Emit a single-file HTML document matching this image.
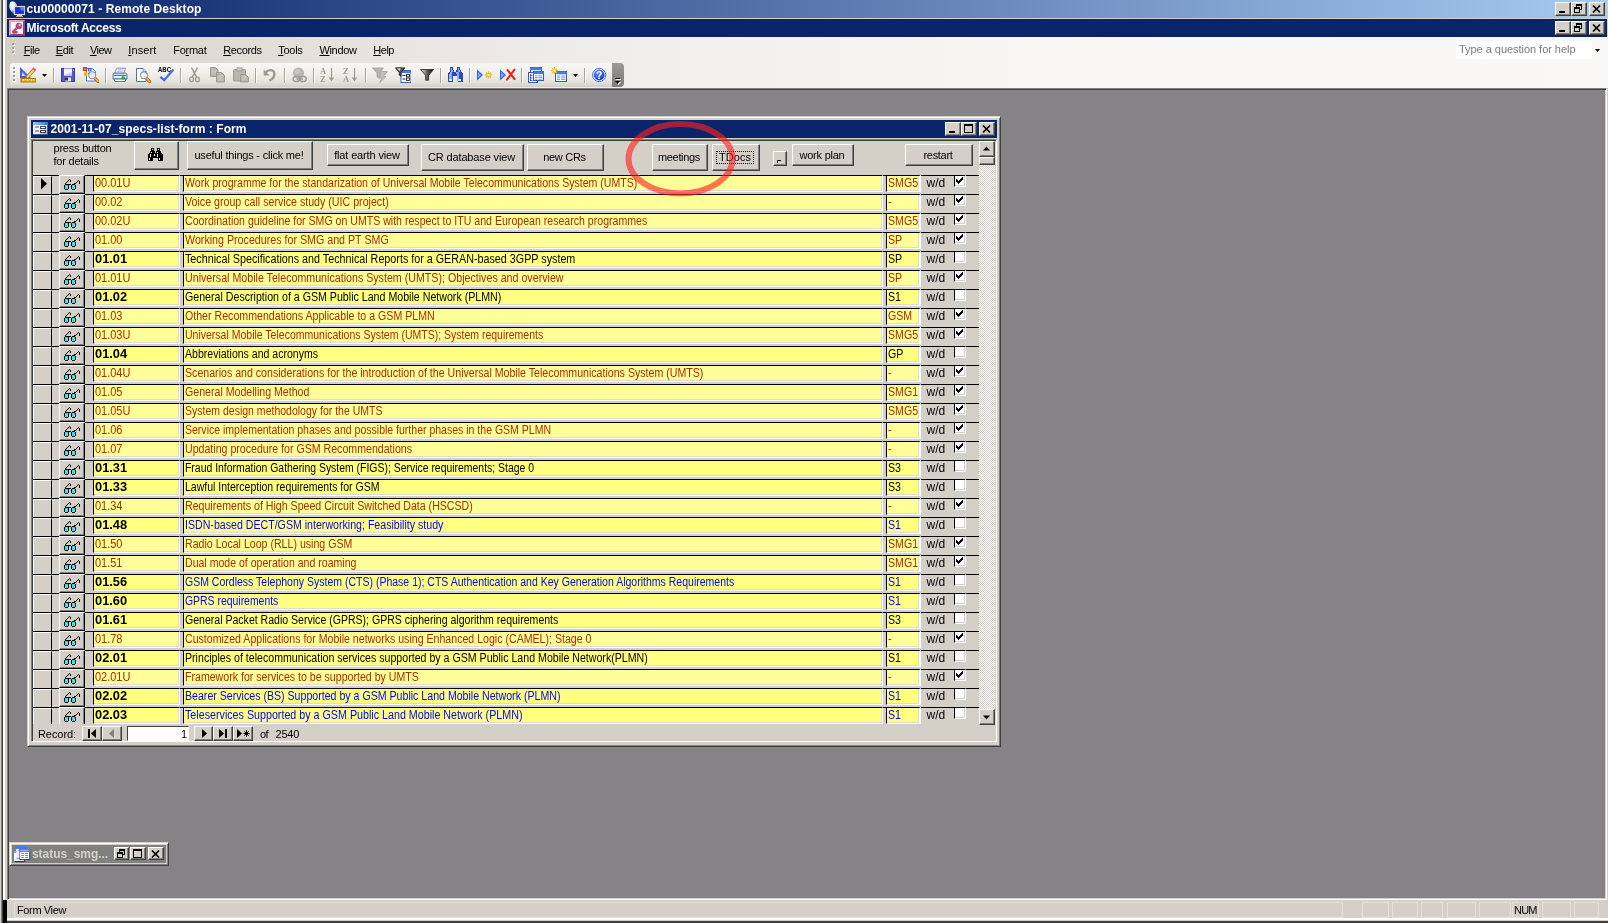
<!DOCTYPE html>
<html lang="en"><head><meta charset="utf-8"><title>Microsoft Access - Remote Desktop</title>
<style>
*{box-sizing:border-box;margin:0;padding:0}
html,body{width:1608px;height:923px;overflow:hidden;background:#d4d0c8}
body{position:relative;font-family:"Liberation Sans",sans-serif;font-size:11px;color:#000;line-height:1}
.a{position:absolute}
.t{position:absolute;white-space:nowrap;line-height:13px;height:13px}
.tb{font-weight:bold;color:#fff}
/* classic raised button */
.btn{position:absolute;background:#d4d0c8;border:1px solid;border-color:#fff #404040 #404040 #fff;box-shadow:inset -1px -1px 0 #808080,inset 1px 1px 0 #d4d0c8}
.cap{position:absolute;background:#d4d0c8;border:1px solid;border-color:#fff #404040 #404040 #fff;box-shadow:inset -1px -1px 0 #808080}
.cb{position:absolute;text-align:center;white-space:nowrap}
/* rows */
.row{position:absolute;left:0;width:946px;height:19px;background:#d4d0c8}
.ln{position:absolute;left:0;top:0;width:946px;height:1px;background:#000}
.rs{position:absolute;left:0;top:1px;width:19px;height:18px;border-left:1px solid #fff;border-top:1px solid #fff;border-right:1px solid #000}
.gb{position:absolute;left:26px;top:0;width:26px;height:19px;background:#d4d0c8;border:1px solid;border-color:#fff #000 #000 #fff;box-shadow:inset -1px -1px 0 #808080}
.tx{position:absolute;top:0;height:17px;border-top:1px solid #000;border-left:1px solid #000;border-bottom:1px solid #fff;border-right:1px solid #fff;box-shadow:inset -1px -1px 0 #dedbd2;overflow:hidden;white-space:nowrap}
.tx span{position:absolute;left:1px;top:0px;line-height:14px;font-size:12px;transform-origin:0 0;transform:scaleX(.883);white-space:nowrap}
.yr{background:#ffff99}.yk{background:#ffff80}
.cr{color:#a62f00}.ck{color:#000}.cbl{color:#0000ff}
.tx span.bold{font-weight:bold;transform:scaleX(1.07)}
.tx span.num{transform:scaleX(.915)}
.wd{position:absolute;left:893.5px;top:1px;line-height:14px;font-size:12px;white-space:nowrap}
.chk{position:absolute;left:921px;top:0;width:12px;height:12px;background:#fff;border-left:1px solid #000;border-top:1px solid #000;border-right:1px solid #fff;border-bottom:1px solid #fff;box-shadow:inset -1px -1px 0 #d4d0c8}
.chk svg{position:absolute;left:1px;top:1px}
.sep{position:absolute;top:68px;width:1px;height:15px;background:#a6a398;box-shadow:1px 0 0 #fff}
.ic{position:absolute;top:67px;width:16px;height:16px}
.sp{position:absolute;top:902px;height:16px;border:1px solid #e6e1dc}
</style></head>
<body><div id="root" style="position:absolute;left:0;top:0;width:1608px;height:923px;will-change:transform">
<div class="a" style="left:0;top:0;width:1px;height:923px;background:#d4d0c8"></div>
<div class="a" style="left:1px;top:0;width:1px;height:923px;background:#808080"></div>
<div class="a" style="left:2px;top:0;width:1px;height:923px;background:#404040"></div>
<div class="a" style="left:3px;top:0;width:2px;height:923px;background:#fff"></div>
<div class="a" style="left:5px;top:0;width:2px;height:923px;background:#d4d0c8"></div>
<div class="a" style="left:7px;top:0;width:1600px;height:18px;background:linear-gradient(90deg,#0a246a 0%,#a6caf0 100%)"></div>
<div class="a" style="left:7px;top:18px;width:1600px;height:1px;background:#d4d0c8"></div>
<div class="a" style="left:7px;top:19px;width:1600px;height:18px;background:#0a246a"></div>
<div class="t tb" style="left:26.5px;top:2.5px;font-size:12px;letter-spacing:0.084px;">cu00000071 - Remote Desktop</div>
<div class="t tb" style="left:26.5px;top:21.5px;font-size:12px;letter-spacing:-0.245px;">Microsoft Access</div>
<div class="cap" style="left:1555px;top:2px;width:16px;height:14px"><svg class="a" style="left:0;top:0" width="14" height="12"><rect x="3" y="8" width="6" height="2" fill="#000"/></svg></div>
<div class="cap" style="left:1571px;top:2px;width:16px;height:14px"><svg class="a" style="left:0;top:0" width="14" height="12"><rect x="4.5" y="1.5" width="5" height="5" fill="none" stroke="#000"/><rect x="4" y="1" width="6" height="2" fill="#000"/><rect x="2.5" y="4.5" width="5" height="5" fill="#d4d0c8" stroke="#000"/><rect x="2" y="4" width="6" height="2" fill="#000"/></svg></div>
<div class="cap" style="left:1589px;top:2px;width:16px;height:14px"><svg class="a" style="left:0;top:0" width="14" height="12"><path d="M3 2.5L10 9.5M10 2.5L3 9.5" stroke="#000" stroke-width="1.7" fill="none"/></svg></div>
<div class="cap" style="left:1555px;top:21px;width:16px;height:14px"><svg class="a" style="left:0;top:0" width="14" height="12"><rect x="3" y="8" width="6" height="2" fill="#000"/></svg></div>
<div class="cap" style="left:1571px;top:21px;width:16px;height:14px"><svg class="a" style="left:0;top:0" width="14" height="12"><rect x="4.5" y="1.5" width="5" height="5" fill="none" stroke="#000"/><rect x="4" y="1" width="6" height="2" fill="#000"/><rect x="2.5" y="4.5" width="5" height="5" fill="#d4d0c8" stroke="#000"/><rect x="2" y="4" width="6" height="2" fill="#000"/></svg></div>
<div class="cap" style="left:1589px;top:21px;width:16px;height:14px"><svg class="a" style="left:0;top:0" width="14" height="12"><path d="M3 2.5L10 9.5M10 2.5L3 9.5" stroke="#000" stroke-width="1.7" fill="none"/></svg></div>
<div class="a" style="left:7px;top:37px;width:1601px;height:51px;background:linear-gradient(90deg,#d4d0c8 0%,#dcd8d1 10%,#e9e6e1 25%,#f1efeb 40%,#f6f5f2 60%,#f9f8f7 100%)"></div>
<svg class="a" style="left:12px;top:42px" width="5" height="14"><rect x="1" y="2" width="2" height="2" fill="#fff"/><rect x="0" y="1" width="2" height="2" fill="#a09c94"/><rect x="1" y="6" width="2" height="2" fill="#fff"/><rect x="0" y="5" width="2" height="2" fill="#a09c94"/><rect x="1" y="10" width="2" height="2" fill="#fff"/><rect x="0" y="9" width="2" height="2" fill="#a09c94"/></svg>
<div class="t" style="left:23.75px;top:44px;letter-spacing:-0.493px"><u>F</u>ile</div>
<div class="t" style="left:55.75px;top:44px;letter-spacing:-0.364px"><u>E</u>dit</div>
<div class="t" style="left:90px;top:44px;letter-spacing:-0.536px"><u>V</u>iew</div>
<div class="t" style="left:128.25px;top:44px;letter-spacing:0.124px"><u>I</u>nsert</div>
<div class="t" style="left:173.25px;top:44px;letter-spacing:-0.264px">Fo<u>r</u>mat</div>
<div class="t" style="left:223.25px;top:44px;letter-spacing:-0.387px"><u>R</u>ecords</div>
<div class="t" style="left:278.25px;top:44px;letter-spacing:-0.286px"><u>T</u>ools</div>
<div class="t" style="left:319.5px;top:44px;letter-spacing:-0.354px"><u>W</u>indow</div>
<div class="t" style="left:373.25px;top:44px;letter-spacing:-0.468px"><u>H</u>elp</div>
<div class="a" style="left:1456px;top:41px;width:136px;height:18px;background:#fff"></div>
<div class="t " style="left:1459px;top:43px;letter-spacing:-0.038px;color:#7a7a7a;">Type a question for help</div>
<svg class="a" style="left:1594px;top:48px" width="8" height="5"><path d="M1 1h5l-2.5 3z" fill="#000"/></svg>
<div class="a" style="left:10px;top:63px;width:602px;height:24px;border-radius:3px 0 0 3px;background:linear-gradient(180deg,#f8f7f5 0%,#f1f0ec 40%,#e4e2dc 80%,#d2cfc7 100%)"></div>
<div class="a" style="left:612px;top:63px;width:12px;height:24px;border-radius:0 4px 4px 0;background:linear-gradient(180deg,#9c9b98 0%,#8a8988 50%,#7f7e7e 100%)"></div>
<svg class="a" style="left:614px;top:77px" width="9" height="9"><rect x="2" y="2" width="5" height="1" fill="#fff"/><path d="M2 5h5l-2.5 3z" fill="#fff"/><rect x="1" y="1" width="5" height="1" fill="#000"/><path d="M1 4h5l-2.5 3z" fill="#000"/></svg>
<svg class="a" style="left:13px;top:66px" width="5" height="18"><rect x="1" y="2" width="2" height="2" fill="#fff"/><rect x="0" y="1" width="2" height="2" fill="#a09c94"/><rect x="1" y="6" width="2" height="2" fill="#fff"/><rect x="0" y="5" width="2" height="2" fill="#a09c94"/><rect x="1" y="10" width="2" height="2" fill="#fff"/><rect x="0" y="9" width="2" height="2" fill="#a09c94"/><rect x="1" y="14" width="2" height="2" fill="#fff"/><rect x="0" y="13" width="2" height="2" fill="#a09c94"/></svg>
<div class="sep" style="left:53px"></div>
<div class="sep" style="left:105px"></div>
<div class="sep" style="left:180px"></div>
<div class="sep" style="left:255px"></div>
<div class="sep" style="left:284px"></div>
<div class="sep" style="left:313px"></div>
<div class="sep" style="left:365px"></div>
<div class="sep" style="left:440px"></div>
<div class="sep" style="left:469px"></div>
<div class="sep" style="left:521px"></div>
<div class="sep" style="left:584px"></div>
<svg class="a" style="left:20px;top:67px" width="16" height="16" viewBox="0 0 16 16"><path d="M0 0V11H11Z" fill="#3f63e0"/><path d="M2 5V9H6Z" fill="#b9c9f6"/><rect x="2" y="7" width="1.5" height="1.5" fill="#fff"/><path d="M7 10.5L14.2 2.4" stroke="#a07818" stroke-width="3.6"/><path d="M7 10.5L14.2 2.4" stroke="#f2d468" stroke-width="2.2"/><path d="M13.4 3.3L15 1.5" stroke="#d86a60" stroke-width="3.4"/><path d="M6.2 11.6L8.4 10.9L7.0 9.4Z" fill="#fff" stroke="#555" stroke-width=".4"/><rect x="1" y="11.5" width="15" height="3.5" fill="#e8b428" stroke="#a87808" stroke-width="1"/><path d="M3.5 12v1.5M5.5 12v1M7.5 12v1.5M9.5 12v1M11.5 12v1.5M13.5 12v1" stroke="#fff6c0" stroke-width="1"/></svg>
<svg class="a" style="left:42px;top:74px" width="5" height="3" viewBox="0 0 5 3"><path d="M0 0h5l-2.5 3z" fill="#000"/></svg>
<svg class="a" style="left:61px;top:67px" width="16" height="16" viewBox="0 0 16 16"><rect x="0.5" y="1.5" width="13" height="13" fill="#5656d0" stroke="#3a3aa8"/><rect x="3" y="1.5" width="8" height="7" fill="#f4f4fc"/><path d="M3 8.5h8V5z" fill="#c8c8e8"/><rect x="4" y="10.5" width="6" height="4" fill="#e8e8f4"/><rect x="4" y="10.5" width="3" height="3" fill="#303048"/><rect x="12" y="2.5" width="1" height="1.5" fill="#c8c8f0"/></svg>
<svg class="a" style="left:83px;top:67px" width="16" height="16" viewBox="0 0 16 16"><path d="M3.5 1.5h6l3 3v9.5h-9z" fill="#fff" stroke="#4c72a8"/><rect x="0" y="0" width="4" height="4" fill="#e02020"/><rect x="1.3" y="1.3" width="1.6" height="1.6" fill="#f8d040"/><rect x="5" y="1" width="3.6" height="3.4" fill="#2868e0"/><rect x="6" y="2" width="1.4" height="1.4" fill="#b8e0ff"/><rect x="1" y="5.4" width="3.4" height="3.4" fill="#f0b010"/><rect x="5" y="5.6" width="2" height="2" fill="#30a030"/><path d="M11.6 10.8L15 14.4" stroke="#a86410" stroke-width="3.2" stroke-linecap="round"/><path d="M11.6 10.8L14.8 14.2" stroke="#f8b040" stroke-width="1.8" stroke-linecap="round"/><circle cx="9.2" cy="8.2" r="3.4" fill="#e8f0fc" stroke="#8c98a8" stroke-width="1.1"/></svg>
<svg class="a" style="left:112px;top:67px" width="16" height="16" viewBox="0 0 16 16"><path d="M4.6 1.2h8.8l-1.6 5H2.8z" fill="#fff" stroke="#6a88b8" stroke-width=".9"/><path d="M5.8 2.8h5.6M5.3 4.4h5.6" stroke="#9cb0d0" stroke-width=".9"/><path d="M1 8Q1 6.2 2.8 6.2h10.4Q15 6.2 15 8V12H1z" fill="#e6ebf4" stroke="#4a689c" stroke-width=".9"/><path d="M1.6 8.4h12.8" stroke="#5a7ab0" stroke-width="1.2"/><path d="M2 12h12l-.8 2.5H2.8z" fill="#fafbfd" stroke="#4a689c" stroke-width=".9"/><rect x="10" y="9.8" width="2.4" height="2.2" fill="#10d020" stroke="#088010" stroke-width=".5"/></svg>
<svg class="a" style="left:136px;top:67px" width="16" height="16" viewBox="0 0 16 16"><path d="M.5 1.5h6.5l3 3v10H.5z" fill="#fff" stroke="#4c72a8"/><path d="M7 1.5v3h3" fill="#dbe6f6" stroke="#4c72a8" stroke-width=".8"/><path d="M10.3 11L13.6 14.6" stroke="#a86410" stroke-width="3.2" stroke-linecap="round"/><path d="M10.3 11L13.4 14.4" stroke="#f8b040" stroke-width="1.8" stroke-linecap="round"/><circle cx="8" cy="8.3" r="3.4" fill="#eef3fc" stroke="#8c98a8" stroke-width="1.1"/></svg>
<svg class="a" style="left:158px;top:67px" width="18" height="16" viewBox="0 0 18 16"><text x="0" y="5.2" font-family="Liberation Sans, sans-serif" font-size="6.4" font-weight="bold" fill="#000" textLength="13" lengthAdjust="spacingAndGlyphs">ABC</text><path d="M2.4 9.8L6.2 13.2L15.4 2.6" stroke="#3f6fe0" stroke-width="2.3" fill="none"/></svg>
<svg class="a" style="left:189px;top:67px" width="11" height="16" viewBox="0 0 11 16"><path d="M2.5 0.5L7.6 10.2M8.5 0.5L3.4 10.2" stroke="#9d9a94" stroke-width="1.5" fill="none"/><ellipse cx="2.6" cy="12.4" rx="1.9" ry="2.2" fill="none" stroke="#9d9a94" stroke-width="1.3"/><ellipse cx="8.4" cy="12.4" rx="1.9" ry="2.2" fill="none" stroke="#9d9a94" stroke-width="1.3"/></svg>
<svg class="a" style="left:210px;top:67px" width="16" height="16" viewBox="0 0 16 16"><path d="M.5 .5h5l2.5 2.5v6.5H.5z" fill="#b9b6b0" stroke="#9d9a94"/><path d="M6.5 5.5h5l3 3v6.5H6.5z" fill="#b9b6b0" stroke="#9d9a94"/><path d="M2 4h4M2 6h4M8.5 9h4M8.5 11h4M8.5 13h4" stroke="#d8d6d0" stroke-width=".8"/></svg>
<svg class="a" style="left:233px;top:67px" width="16" height="16" viewBox="0 0 16 16"><rect x=".5" y="2.5" width="12" height="11.5" rx="1" fill="#b9b6b0" stroke="#9d9a94"/><rect x="4" y=".8" width="5" height="3.2" fill="#cfccc6" stroke="#9d9a94" stroke-width=".8"/><path d="M7.5 7.5h5l3 3v4.5h-8z" fill="#b9b6b0" stroke="#9d9a94"/><path d="M9 10h4M9 12h4" stroke="#d8d6d0" stroke-width=".8"/></svg>
<svg class="a" style="left:263px;top:67px" width="13" height="16" viewBox="0 0 13 16"><path d="M2.2 5.8C6 1.5 11.6 2.6 11.4 7.4C11.2 10.6 8.6 12.6 6.4 13.6" fill="none" stroke="#9d9a94" stroke-width="2.3"/><path d="M.6 2.4V8.4H6.6Z" fill="#9d9a94"/></svg>
<svg class="a" style="left:290.5px;top:67px" width="16" height="16" viewBox="0 0 16 16"><circle cx="7.5" cy="6" r="5.6" fill="#b9b6b0"/><circle cx="6" cy="4.4" r="2.6" fill="#c9c6c0"/><rect x="2.2" y="9.6" width="6.4" height="4.8" rx="2.4" fill="none" stroke="#9d9a94" stroke-width="1.5"/><rect x="8.8" y="9.6" width="6.4" height="4.8" rx="2.4" fill="none" stroke="#9d9a94" stroke-width="1.5"/><path d="M5.5 12h6.5" stroke="#9d9a94" stroke-width="1.5"/></svg>
<svg class="a" style="left:320px;top:67px" width="16" height="16" viewBox="0 0 16 16"><text x="0" y="7" font-family="Liberation Serif, serif" font-size="8.5" font-weight="bold" fill="#9d9a94">A</text><text x="0" y="15.4" font-family="Liberation Serif, serif" font-size="8.5" font-weight="bold" fill="#9d9a94">Z</text><path d="M11.5 1v12" stroke="#9d9a94" stroke-width="1.2"/><path d="M8.8 10.6h5.4l-2.7 4z" fill="#9d9a94"/></svg>
<svg class="a" style="left:343px;top:67px" width="16" height="16" viewBox="0 0 16 16"><text x="0" y="7" font-family="Liberation Serif, serif" font-size="8.5" font-weight="bold" fill="#9d9a94">Z</text><text x="0" y="15.4" font-family="Liberation Serif, serif" font-size="8.5" font-weight="bold" fill="#9d9a94">A</text><path d="M11.5 1v12" stroke="#9d9a94" stroke-width="1.2"/><path d="M8.8 10.6h5.4l-2.7 4z" fill="#9d9a94"/></svg>
<svg class="a" style="left:372px;top:67px" width="16" height="16" viewBox="0 0 16 16"><path d="M.5 1h11L7.4 6v5.4L5 9.6V6z" fill="#b9b6b0" stroke="#9d9a94" stroke-width=".7"/><path d="M9 4.6h6.5L11 9.6h3L7.8 15.6L9.8 10.8H7z" fill="#c4c1bb" stroke="#9d9a94" stroke-width=".7"/></svg>
<svg class="a" style="left:395px;top:67px" width="16" height="16" viewBox="0 0 16 16"><rect x="6" y="3.5" width="10" height="12" fill="#fff" stroke="#3a5cb8" stroke-width="1"/><rect x="6" y="3.5" width="10" height="2.6" fill="#4a7ae0"/><path d="M7.5 8.5h3M7.5 12h3" stroke="#222" stroke-width="1"/><rect x="11.5" y="7.4" width="3" height="2.4" fill="#fff" stroke="#222" stroke-width=".9"/><rect x="11.5" y="11" width="3" height="2.4" fill="#fff" stroke="#222" stroke-width=".9"/><path d="M.4 .8h9.4L6 5.4v4L4.2 8V5.4z" fill="#555" stroke="#111" stroke-width=".7"/><path d="M1.8 1.4h4L4.6 4z" fill="#ddd"/></svg>
<svg class="a" style="left:419.5px;top:68px" width="14" height="14" viewBox="0 0 14 14"><defs><linearGradient id="fg" x1="0" x2="1"><stop offset="0" stop-color="#f4f4f4"/><stop offset=".55" stop-color="#555"/><stop offset="1" stop-color="#111"/></linearGradient></defs><path d="M.5 1.5h13L8.6 7.4v4.8H5.6V7.4z" fill="url(#fg)" stroke="#222" stroke-width=".8"/></svg>
<svg class="a" style="left:447px;top:67px" width="16" height="16" viewBox="0 0 16 16"><path d="M3 0h3v3h1v2h2V3h1V0h3v3h1v2h1v1h1v9h-5V9H6v6H1V6h1V5h1z" fill="#2a48b8"/><path d="M4 1h1v2h1v2h-1v9H2V7h1V5h1z" fill="#8fa8f0"/><path d="M11 1h1v2h1v2h-1v9h-2V7h-1V5h2z" fill="#8fa8f0"/><rect x="2" y="12" width="3" height="2" fill="#dfe7fb"/><rect x="11" y="12" width="3" height="2" fill="#dfe7fb"/></svg>
<svg class="a" style="left:476.5px;top:67px" width="16" height="16" viewBox="0 0 16 16"><path d="M0 2.5v11l6-5.5z" fill="#2f66e4"/><path d="M1 5v6l3.2-3z" fill="#7fa6f4"/><path d="M11.5 4.5v7M8.0 8h7M9.0 5.5l5 5M14.0 5.5l-5 5" stroke="#f0b818" stroke-width="1.3"/><rect x="10.5" y="7" width="2" height="2" fill="#fffbd0"/></svg>
<svg class="a" style="left:500px;top:67px" width="16" height="16" viewBox="0 0 16 16"><path d="M0 2.5v11l6-5.5z" fill="#2f66e4"/><path d="M1 5v6l3.2-3z" fill="#7fa6f4"/><path d="M7.5 3L14.5 12M14.5 2.6L7 12.6" stroke="#e82818" stroke-width="2.1" stroke-linecap="round"/></svg>
<svg class="a" style="left:528px;top:67px" width="16" height="16" viewBox="0 0 16 16"><rect x="2.5" y=".5" width="11" height="9" fill="#dfe8fa" stroke="#3a5cb8"/><rect x="2.5" y=".5" width="11" height="2.6" fill="#4a7ae0"/><rect x=".5" y="5.5" width="9" height="10" fill="#f4f7fd" stroke="#3a5cb8"/><path d="M2.5 7v7M2.5 8.5h2M2.5 11h2M2.5 13.5h2" stroke="#3a5cb8" stroke-width=".9"/><rect x="5.5" y="4.5" width="10" height="9" fill="#fff" stroke="#3a5cb8"/><rect x="5.5" y="4.5" width="10" height="2.6" fill="#4a7ae0"/><path d="M7 8.8h2.6M10.4 8.8h4M7 10.5h2.6M10.4 10.5h4M7 12.2h2.6M10.4 12.2h4" stroke="#7a98dc" stroke-width="1"/></svg>
<svg class="a" style="left:550.5px;top:67px" width="16" height="16" viewBox="0 0 16 16"><rect x="4.5" y="4.5" width="11" height="10" fill="#fff" stroke="#3a5cb8"/><rect x="4.5" y="4.5" width="11" height="2.8" fill="#4a7ae0"/><path d="M6 9h3M10 9h4.4M6 10.8h3M10 10.8h4.4M6 12.6h3M10 12.6h4.4" stroke="#7a98dc" stroke-width="1"/><path d="M3.5 0.10000000000000009v7M0.0 3.6h7M1.0 1.1l5 5M6.0 1.1l-5 5" stroke="#f0b818" stroke-width="1.3"/><rect x="2.5" y="2.6" width="2" height="2" fill="#fffbd0"/></svg>
<svg class="a" style="left:573px;top:74px" width="5" height="3" viewBox="0 0 5 3"><path d="M0 0h5l-2.5 3z" fill="#000"/></svg>
<svg class="a" style="left:592px;top:67px" width="15" height="16" viewBox="0 0 15 16"><defs><radialGradient id="hg" cx=".35" cy=".3" r=".8"><stop offset="0" stop-color="#5a94ff"/><stop offset="1" stop-color="#1238c8"/></radialGradient></defs><circle cx="7.2" cy="8" r="6.6" fill="#fff" stroke="#2a58d8" stroke-width=".9"/><circle cx="7.2" cy="8" r="5.4" fill="url(#hg)"/><text x="7.2" y="11.8" text-anchor="middle" font-family="Liberation Sans, sans-serif" font-size="10.5" font-weight="bold" fill="#fff">?</text></svg>
<div class="a" style="left:7px;top:88px;width:1600px;height:812px;background:#858386;border:1px solid;border-color:#808080 #fff #fff #808080;box-shadow:inset 1px 1px 0 #404040,inset -1px -1px 0 #d4d0c8"></div>
<div class="a" style="left:7px;top:900px;width:1601px;height:18px;background:#d4d0c8"></div>
<div class="a" style="left:7px;top:918px;width:1601px;height:2px;background:#fff"></div>
<div class="a" style="left:7px;top:920px;width:1601px;height:1px;background:#d4d0c8"></div>
<div class="a" style="left:7px;top:921px;width:1601px;height:2px;background:#404040"></div>
<div class="a" style="left:3px;top:900px;width:4px;height:23px;background:#000"></div>
<div class="sp" style="left:14px;width:1329px"></div>
<div class="sp" style="left:1362px;width:27px"></div>
<div class="sp" style="left:1392px;width:26px"></div>
<div class="sp" style="left:1421px;width:22px"></div>
<div class="sp" style="left:1447px;width:29px"></div>
<div class="sp" style="left:1479px;width:32px"></div>
<div class="sp" style="left:1512px;width:27px"></div>
<div class="sp" style="left:1542px;width:29px"></div>
<div class="sp" style="left:1574px;width:25px"></div>
<div class="t " style="left:17px;top:903.5px;letter-spacing:-0.373px;">Form View</div>
<div class="t " style="left:1514px;top:903.5px;letter-spacing:-0.817px;">NUM</div>
<div class="a" style="left:9px;top:842px;width:160px;height:24px;background:#808080;border:1px solid;border-color:#d4d0c8 #404040 #404040 #d4d0c8;box-shadow:inset 1px 1px 0 #fff,inset -1px -1px 0 #808080,inset 2px 2px 0 #d4d0c8,inset -2px -2px 0 #d4d0c8"></div>
<div class="a" style="left:12px;top:845px;width:154px;height:18px;background:#808080"></div>
<div class="t " style="left:32px;top:847.5px;font-size:12px;letter-spacing:-0.053px;color:#d4d0c8;font-weight:bold;">status_smg...</div>
<div class="cap" style="left:114px;top:847px;width:15px;height:13px"><svg class="a" style="left:0;top:0" width="14" height="12"><rect x="4.5" y="1.5" width="5" height="5" fill="none" stroke="#000"/><rect x="4" y="1" width="6" height="2" fill="#000"/><rect x="2.5" y="4.5" width="5" height="5" fill="#d4d0c8" stroke="#000"/><rect x="2" y="4" width="6" height="2" fill="#000"/></svg></div>
<div class="cap" style="left:130px;top:847px;width:16px;height:13px"><svg class="a" style="left:0;top:0" width="14" height="12"><rect x="2.5" y="1.5" width="8" height="8" fill="none" stroke="#000"/><rect x="2" y="1" width="9" height="2" fill="#000"/></svg></div>
<div class="cap" style="left:148px;top:847px;width:16px;height:13px"><svg class="a" style="left:0;top:0" width="14" height="12"><path d="M3 2.5L10 9.5M10 2.5L3 9.5" stroke="#000" stroke-width="1.7" fill="none"/></svg></div>
<div class="a" style="left:27px;top:116px;width:974px;height:631px;background:#d4d0c8;border:1px solid;border-color:#d4d0c8 #404040 #404040 #d4d0c8;box-shadow:inset 1px 1px 0 #fff,inset -1px -1px 0 #808080"></div>
<div class="a" style="left:31px;top:120px;width:966px;height:18px;background:#0a246a"></div>
<div class="t tb" style="left:50.5px;top:122.5px;font-size:12px;letter-spacing:0.059px;">2001-11-07_specs-list-form : Form</div>
<div class="cap" style="left:945px;top:122px;width:16px;height:14px"><svg class="a" style="left:0;top:0" width="14" height="12"><rect x="3" y="8" width="6" height="2" fill="#000"/></svg></div>
<div class="cap" style="left:961px;top:122px;width:16px;height:14px"><svg class="a" style="left:0;top:0" width="14" height="12"><rect x="2.5" y="1.5" width="8" height="8" fill="none" stroke="#000"/><rect x="2" y="1" width="9" height="2" fill="#000"/></svg></div>
<div class="cap" style="left:979px;top:122px;width:16px;height:14px"><svg class="a" style="left:0;top:0" width="14" height="12"><path d="M3 2.5L10 9.5M10 2.5L3 9.5" stroke="#000" stroke-width="1.7" fill="none"/></svg></div>
<div class="a" style="left:31px;top:139px;width:966px;height:603px;background:#d4d0c8;border:1px solid;border-color:#808080 #fff #fff #808080;box-shadow:inset 1px 1px 0 #404040,inset -1px -1px 0 #d4d0c8"></div>
<div class="t" style="left:53.5px;top:142px;line-height:13px;height:26px;letter-spacing:-0.211px">press button<br>for details</div>
<div class="btn" style="left:134px;top:141px;width:45px;height:29px"><svg class="a" style="left:13px;top:6px" width="15" height="13" viewBox="0 0 15 13"><path d="M3 0h3v3h1v2h1V3h1V0h3v3h1v2h1v1h1v7h-5V10H5v3H0V6h1V5h1V3h1z" fill="#000"/><g fill="#fff"><rect x="4" y="1" width="1" height="1"/><rect x="10" y="1" width="1" height="1"/><rect x="3" y="4" width="1" height="1"/><rect x="9" y="4" width="1" height="1"/><rect x="2" y="6" width="1" height="3"/><rect x="6" y="6" width="1" height="2"/><rect x="9" y="6" width="1" height="3"/><rect x="1" y="10" width="1" height="2"/><rect x="11" y="10" width="1" height="2"/></g></svg></div>
<div class="btn" style="left:187px;top:141px;width:126px;height:29px"><div class="cb" style="left:-1px;right:1px;top:7px;line-height:13px;letter-spacing:-0.208px;">useful things - click me!</div></div>
<div class="btn" style="left:327px;top:144px;width:82px;height:22px"><div class="cb" style="left:-1px;right:1px;top:3.5px;line-height:13px;letter-spacing:-0.144px;">flat earth view</div></div>
<div class="btn" style="left:421px;top:144px;width:103px;height:27px"><div class="cb" style="left:-1px;right:1px;top:6px;line-height:13px;letter-spacing:-0.148px;">CR database view</div></div>
<div class="btn" style="left:527px;top:144px;width:77px;height:27px"><div class="cb" style="left:-1px;right:1px;top:6px;line-height:13px;letter-spacing:-0.303px;">new CRs</div></div>
<div class="btn" style="left:652px;top:144px;width:56px;height:27px"><div class="cb" style="left:-1px;right:1px;top:6px;line-height:13px;letter-spacing:-0.329px;">meetings</div></div>
<div class="btn" style="left:712px;top:144px;width:48px;height:27px"><div class="cb" style="left:-1px;right:1px;top:6px;line-height:13px;letter-spacing:0.044px;">TDocs</div><div class="a" style="left:3px;top:6px;right:5px;bottom:6px;border:1px dotted #000"></div></div>
<div class="btn" style="left:773px;top:151px;width:14px;height:15px"><svg class="a" style="left:3px;top:7px" width="5" height="4"><path d="M0.5 4V1.5H4" stroke="#000" fill="none"/></svg></div>
<div class="btn" style="left:792px;top:144px;width:62px;height:22px"><div class="cb" style="left:-1px;right:1px;top:3.5px;line-height:13px;letter-spacing:-0.231px;">work plan</div></div>
<div class="btn" style="left:905px;top:144px;width:68px;height:22px"><div class="cb" style="left:-1px;right:1px;top:3.5px;line-height:13px;letter-spacing:-0.310px;">restart</div></div>
<div class="a" style="left:33px;top:175px;width:946px;height:549px;overflow:hidden">
<div class="row" style="top:0px"><div class="ln"></div>
<div class="rs"><svg class="a" style="left:7px;top:1px" width="7" height="12"><path d="M0 0L6 5.75L0 11.5z" fill="#000"/></svg></div>
<div class="gb"><svg class="a" style="left:3px;top:2px" width="17" height="13" viewBox="0 0 17 13" shape-rendering="crispEdges"><path d="M2 7h3v4h-3zM9 7h3v4h-3z" fill="#00e8f8"/><path d="M3 8h1v1h-1zM2 10h1v1h-1zM4 9h1v1h-1zM10 8h1v1h-1zM9 10h1v1h-1zM11 9h1v1h-1z" fill="#90faff"/><path d="M2 6h3v1h-3zM2 11h3v1h-3zM1 7h1v4h-1zM5 7h1v4h-1zM9 6h3v1h-3zM9 11h3v1h-3zM8 7h1v4h-1zM12 7h1v4h-1zM5 6h3v1h-3zM2 5h1v1h-1zM3 4h1v1h-1zM4 3h1v1h-1zM5 2h1v1h-1zM6 1h1v1h-1zM7 2h1v1h-1zM7 3h1v1h-1zM11 5h1v1h-1zM12 5h1v1h-1zM13 4h1v1h-1zM14 3h1v1h-1zM15 2h1v1h-1zM16 3h1v1h-1zM16 4h1v1h-1zM16 5h1v1h-1z" fill="#000"/></svg></div>
<div class="tx yr" style="left:60px;width:87px"><span class="cr num">00.01U</span></div>
<div class="tx yr" style="left:150px;width:700px"><span class="cr" style="transform:scaleX(0.8803)">Work programme for the standarization of Universal Mobile Telecommunications System (UMTS)</span></div>
<div class="tx yr" style="left:853px;width:35px;border-right:2px solid #fff"><span class="cr">SMG5</span></div>
<div class="wd">w/d</div>
<div class="chk"><svg width="7" height="7" viewBox="0 0 7 7" shape-rendering="crispEdges"><path d="M0 2h1v3h-1zM1 3h1v3h-1zM2 4h1v3h-1zM3 3h1v3h-1zM4 2h1v3h-1zM5 1h1v3h-1zM6 0h1v3h-1z" fill="#000"/></svg></div>
</div>
<div class="row" style="top:19px"><div class="ln"></div>
<div class="rs"></div>
<div class="gb"><svg class="a" style="left:3px;top:2px" width="17" height="13" viewBox="0 0 17 13" shape-rendering="crispEdges"><path d="M2 7h3v4h-3zM9 7h3v4h-3z" fill="#00e8f8"/><path d="M3 8h1v1h-1zM2 10h1v1h-1zM4 9h1v1h-1zM10 8h1v1h-1zM9 10h1v1h-1zM11 9h1v1h-1z" fill="#90faff"/><path d="M2 6h3v1h-3zM2 11h3v1h-3zM1 7h1v4h-1zM5 7h1v4h-1zM9 6h3v1h-3zM9 11h3v1h-3zM8 7h1v4h-1zM12 7h1v4h-1zM5 6h3v1h-3zM2 5h1v1h-1zM3 4h1v1h-1zM4 3h1v1h-1zM5 2h1v1h-1zM6 1h1v1h-1zM7 2h1v1h-1zM7 3h1v1h-1zM11 5h1v1h-1zM12 5h1v1h-1zM13 4h1v1h-1zM14 3h1v1h-1zM15 2h1v1h-1zM16 3h1v1h-1zM16 4h1v1h-1zM16 5h1v1h-1z" fill="#000"/></svg></div>
<div class="tx yr" style="left:60px;width:87px"><span class="cr num">00.02</span></div>
<div class="tx yr" style="left:150px;width:700px"><span class="cr" style="transform:scaleX(0.8879)">Voice group call service study (UIC project)</span></div>
<div class="tx yr" style="left:853px;width:35px;border-right:2px solid #fff"><span class="cr">-</span></div>
<div class="wd">w/d</div>
<div class="chk"><svg width="7" height="7" viewBox="0 0 7 7" shape-rendering="crispEdges"><path d="M0 2h1v3h-1zM1 3h1v3h-1zM2 4h1v3h-1zM3 3h1v3h-1zM4 2h1v3h-1zM5 1h1v3h-1zM6 0h1v3h-1z" fill="#000"/></svg></div>
</div>
<div class="row" style="top:38px"><div class="ln"></div>
<div class="rs"></div>
<div class="gb"><svg class="a" style="left:3px;top:2px" width="17" height="13" viewBox="0 0 17 13" shape-rendering="crispEdges"><path d="M2 7h3v4h-3zM9 7h3v4h-3z" fill="#00e8f8"/><path d="M3 8h1v1h-1zM2 10h1v1h-1zM4 9h1v1h-1zM10 8h1v1h-1zM9 10h1v1h-1zM11 9h1v1h-1z" fill="#90faff"/><path d="M2 6h3v1h-3zM2 11h3v1h-3zM1 7h1v4h-1zM5 7h1v4h-1zM9 6h3v1h-3zM9 11h3v1h-3zM8 7h1v4h-1zM12 7h1v4h-1zM5 6h3v1h-3zM2 5h1v1h-1zM3 4h1v1h-1zM4 3h1v1h-1zM5 2h1v1h-1zM6 1h1v1h-1zM7 2h1v1h-1zM7 3h1v1h-1zM11 5h1v1h-1zM12 5h1v1h-1zM13 4h1v1h-1zM14 3h1v1h-1zM15 2h1v1h-1zM16 3h1v1h-1zM16 4h1v1h-1zM16 5h1v1h-1z" fill="#000"/></svg></div>
<div class="tx yr" style="left:60px;width:87px"><span class="cr num">00.02U</span></div>
<div class="tx yr" style="left:150px;width:700px"><span class="cr" style="transform:scaleX(0.8817)">Coordination guideline for SMG on UMTS with respect to ITU and European research programmes</span></div>
<div class="tx yr" style="left:853px;width:35px;border-right:2px solid #fff"><span class="cr">SMG5</span></div>
<div class="wd">w/d</div>
<div class="chk"><svg width="7" height="7" viewBox="0 0 7 7" shape-rendering="crispEdges"><path d="M0 2h1v3h-1zM1 3h1v3h-1zM2 4h1v3h-1zM3 3h1v3h-1zM4 2h1v3h-1zM5 1h1v3h-1zM6 0h1v3h-1z" fill="#000"/></svg></div>
</div>
<div class="row" style="top:57px"><div class="ln"></div>
<div class="rs"></div>
<div class="gb"><svg class="a" style="left:3px;top:2px" width="17" height="13" viewBox="0 0 17 13" shape-rendering="crispEdges"><path d="M2 7h3v4h-3zM9 7h3v4h-3z" fill="#00e8f8"/><path d="M3 8h1v1h-1zM2 10h1v1h-1zM4 9h1v1h-1zM10 8h1v1h-1zM9 10h1v1h-1zM11 9h1v1h-1z" fill="#90faff"/><path d="M2 6h3v1h-3zM2 11h3v1h-3zM1 7h1v4h-1zM5 7h1v4h-1zM9 6h3v1h-3zM9 11h3v1h-3zM8 7h1v4h-1zM12 7h1v4h-1zM5 6h3v1h-3zM2 5h1v1h-1zM3 4h1v1h-1zM4 3h1v1h-1zM5 2h1v1h-1zM6 1h1v1h-1zM7 2h1v1h-1zM7 3h1v1h-1zM11 5h1v1h-1zM12 5h1v1h-1zM13 4h1v1h-1zM14 3h1v1h-1zM15 2h1v1h-1zM16 3h1v1h-1zM16 4h1v1h-1zM16 5h1v1h-1z" fill="#000"/></svg></div>
<div class="tx yr" style="left:60px;width:87px"><span class="cr num">01.00</span></div>
<div class="tx yr" style="left:150px;width:700px"><span class="cr" style="transform:scaleX(0.8897)">Working Procedures for SMG and PT SMG</span></div>
<div class="tx yr" style="left:853px;width:35px;border-right:2px solid #fff"><span class="cr">SP</span></div>
<div class="wd">w/d</div>
<div class="chk"><svg width="7" height="7" viewBox="0 0 7 7" shape-rendering="crispEdges"><path d="M0 2h1v3h-1zM1 3h1v3h-1zM2 4h1v3h-1zM3 3h1v3h-1zM4 2h1v3h-1zM5 1h1v3h-1zM6 0h1v3h-1z" fill="#000"/></svg></div>
</div>
<div class="row" style="top:76px"><div class="ln"></div>
<div class="rs"></div>
<div class="gb"><svg class="a" style="left:3px;top:2px" width="17" height="13" viewBox="0 0 17 13" shape-rendering="crispEdges"><path d="M2 7h3v4h-3zM9 7h3v4h-3z" fill="#00e8f8"/><path d="M3 8h1v1h-1zM2 10h1v1h-1zM4 9h1v1h-1zM10 8h1v1h-1zM9 10h1v1h-1zM11 9h1v1h-1z" fill="#90faff"/><path d="M2 6h3v1h-3zM2 11h3v1h-3zM1 7h1v4h-1zM5 7h1v4h-1zM9 6h3v1h-3zM9 11h3v1h-3zM8 7h1v4h-1zM12 7h1v4h-1zM5 6h3v1h-3zM2 5h1v1h-1zM3 4h1v1h-1zM4 3h1v1h-1zM5 2h1v1h-1zM6 1h1v1h-1zM7 2h1v1h-1zM7 3h1v1h-1zM11 5h1v1h-1zM12 5h1v1h-1zM13 4h1v1h-1zM14 3h1v1h-1zM15 2h1v1h-1zM16 3h1v1h-1zM16 4h1v1h-1zM16 5h1v1h-1z" fill="#000"/></svg></div>
<div class="tx yk" style="left:60px;width:87px"><span class="ck bold">01.01</span></div>
<div class="tx yk" style="left:150px;width:700px"><span class="ck" style="transform:scaleX(0.8957)">Technical Specifications and Technical Reports for a GERAN-based 3GPP system</span></div>
<div class="tx yk" style="left:853px;width:35px;border-right:2px solid #fff"><span class="ck">SP</span></div>
<div class="wd">w/d</div>
<div class="chk"></div>
</div>
<div class="row" style="top:95px"><div class="ln"></div>
<div class="rs"></div>
<div class="gb"><svg class="a" style="left:3px;top:2px" width="17" height="13" viewBox="0 0 17 13" shape-rendering="crispEdges"><path d="M2 7h3v4h-3zM9 7h3v4h-3z" fill="#00e8f8"/><path d="M3 8h1v1h-1zM2 10h1v1h-1zM4 9h1v1h-1zM10 8h1v1h-1zM9 10h1v1h-1zM11 9h1v1h-1z" fill="#90faff"/><path d="M2 6h3v1h-3zM2 11h3v1h-3zM1 7h1v4h-1zM5 7h1v4h-1zM9 6h3v1h-3zM9 11h3v1h-3zM8 7h1v4h-1zM12 7h1v4h-1zM5 6h3v1h-3zM2 5h1v1h-1zM3 4h1v1h-1zM4 3h1v1h-1zM5 2h1v1h-1zM6 1h1v1h-1zM7 2h1v1h-1zM7 3h1v1h-1zM11 5h1v1h-1zM12 5h1v1h-1zM13 4h1v1h-1zM14 3h1v1h-1zM15 2h1v1h-1zM16 3h1v1h-1zM16 4h1v1h-1zM16 5h1v1h-1z" fill="#000"/></svg></div>
<div class="tx yr" style="left:60px;width:87px"><span class="cr num">01.01U</span></div>
<div class="tx yr" style="left:150px;width:700px"><span class="cr" style="transform:scaleX(0.8887)">Universal Mobile Telecommunications System (UMTS); Objectives and overview</span></div>
<div class="tx yr" style="left:853px;width:35px;border-right:2px solid #fff"><span class="cr">SP</span></div>
<div class="wd">w/d</div>
<div class="chk"><svg width="7" height="7" viewBox="0 0 7 7" shape-rendering="crispEdges"><path d="M0 2h1v3h-1zM1 3h1v3h-1zM2 4h1v3h-1zM3 3h1v3h-1zM4 2h1v3h-1zM5 1h1v3h-1zM6 0h1v3h-1z" fill="#000"/></svg></div>
</div>
<div class="row" style="top:114px"><div class="ln"></div>
<div class="rs"></div>
<div class="gb"><svg class="a" style="left:3px;top:2px" width="17" height="13" viewBox="0 0 17 13" shape-rendering="crispEdges"><path d="M2 7h3v4h-3zM9 7h3v4h-3z" fill="#00e8f8"/><path d="M3 8h1v1h-1zM2 10h1v1h-1zM4 9h1v1h-1zM10 8h1v1h-1zM9 10h1v1h-1zM11 9h1v1h-1z" fill="#90faff"/><path d="M2 6h3v1h-3zM2 11h3v1h-3zM1 7h1v4h-1zM5 7h1v4h-1zM9 6h3v1h-3zM9 11h3v1h-3zM8 7h1v4h-1zM12 7h1v4h-1zM5 6h3v1h-3zM2 5h1v1h-1zM3 4h1v1h-1zM4 3h1v1h-1zM5 2h1v1h-1zM6 1h1v1h-1zM7 2h1v1h-1zM7 3h1v1h-1zM11 5h1v1h-1zM12 5h1v1h-1zM13 4h1v1h-1zM14 3h1v1h-1zM15 2h1v1h-1zM16 3h1v1h-1zM16 4h1v1h-1zM16 5h1v1h-1z" fill="#000"/></svg></div>
<div class="tx yk" style="left:60px;width:87px"><span class="ck bold">01.02</span></div>
<div class="tx yk" style="left:150px;width:700px"><span class="ck" style="transform:scaleX(0.8865)">General Description of a GSM Public Land Mobile Network (PLMN)</span></div>
<div class="tx yk" style="left:853px;width:35px;border-right:2px solid #fff"><span class="ck">S1</span></div>
<div class="wd">w/d</div>
<div class="chk"></div>
</div>
<div class="row" style="top:133px"><div class="ln"></div>
<div class="rs"></div>
<div class="gb"><svg class="a" style="left:3px;top:2px" width="17" height="13" viewBox="0 0 17 13" shape-rendering="crispEdges"><path d="M2 7h3v4h-3zM9 7h3v4h-3z" fill="#00e8f8"/><path d="M3 8h1v1h-1zM2 10h1v1h-1zM4 9h1v1h-1zM10 8h1v1h-1zM9 10h1v1h-1zM11 9h1v1h-1z" fill="#90faff"/><path d="M2 6h3v1h-3zM2 11h3v1h-3zM1 7h1v4h-1zM5 7h1v4h-1zM9 6h3v1h-3zM9 11h3v1h-3zM8 7h1v4h-1zM12 7h1v4h-1zM5 6h3v1h-3zM2 5h1v1h-1zM3 4h1v1h-1zM4 3h1v1h-1zM5 2h1v1h-1zM6 1h1v1h-1zM7 2h1v1h-1zM7 3h1v1h-1zM11 5h1v1h-1zM12 5h1v1h-1zM13 4h1v1h-1zM14 3h1v1h-1zM15 2h1v1h-1zM16 3h1v1h-1zM16 4h1v1h-1zM16 5h1v1h-1z" fill="#000"/></svg></div>
<div class="tx yr" style="left:60px;width:87px"><span class="cr num">01.03</span></div>
<div class="tx yr" style="left:150px;width:700px"><span class="cr" style="transform:scaleX(0.8851)">Other Recommendations Applicable to a GSM PLMN</span></div>
<div class="tx yr" style="left:853px;width:35px;border-right:2px solid #fff"><span class="cr">GSM</span></div>
<div class="wd">w/d</div>
<div class="chk"><svg width="7" height="7" viewBox="0 0 7 7" shape-rendering="crispEdges"><path d="M0 2h1v3h-1zM1 3h1v3h-1zM2 4h1v3h-1zM3 3h1v3h-1zM4 2h1v3h-1zM5 1h1v3h-1zM6 0h1v3h-1z" fill="#000"/></svg></div>
</div>
<div class="row" style="top:152px"><div class="ln"></div>
<div class="rs"></div>
<div class="gb"><svg class="a" style="left:3px;top:2px" width="17" height="13" viewBox="0 0 17 13" shape-rendering="crispEdges"><path d="M2 7h3v4h-3zM9 7h3v4h-3z" fill="#00e8f8"/><path d="M3 8h1v1h-1zM2 10h1v1h-1zM4 9h1v1h-1zM10 8h1v1h-1zM9 10h1v1h-1zM11 9h1v1h-1z" fill="#90faff"/><path d="M2 6h3v1h-3zM2 11h3v1h-3zM1 7h1v4h-1zM5 7h1v4h-1zM9 6h3v1h-3zM9 11h3v1h-3zM8 7h1v4h-1zM12 7h1v4h-1zM5 6h3v1h-3zM2 5h1v1h-1zM3 4h1v1h-1zM4 3h1v1h-1zM5 2h1v1h-1zM6 1h1v1h-1zM7 2h1v1h-1zM7 3h1v1h-1zM11 5h1v1h-1zM12 5h1v1h-1zM13 4h1v1h-1zM14 3h1v1h-1zM15 2h1v1h-1zM16 3h1v1h-1zM16 4h1v1h-1zM16 5h1v1h-1z" fill="#000"/></svg></div>
<div class="tx yr" style="left:60px;width:87px"><span class="cr num">01.03U</span></div>
<div class="tx yr" style="left:150px;width:700px"><span class="cr" style="transform:scaleX(0.8753)">Universal Mobile Telecommunications System (UMTS); System requirements</span></div>
<div class="tx yr" style="left:853px;width:35px;border-right:2px solid #fff"><span class="cr">SMG5</span></div>
<div class="wd">w/d</div>
<div class="chk"><svg width="7" height="7" viewBox="0 0 7 7" shape-rendering="crispEdges"><path d="M0 2h1v3h-1zM1 3h1v3h-1zM2 4h1v3h-1zM3 3h1v3h-1zM4 2h1v3h-1zM5 1h1v3h-1zM6 0h1v3h-1z" fill="#000"/></svg></div>
</div>
<div class="row" style="top:171px"><div class="ln"></div>
<div class="rs"></div>
<div class="gb"><svg class="a" style="left:3px;top:2px" width="17" height="13" viewBox="0 0 17 13" shape-rendering="crispEdges"><path d="M2 7h3v4h-3zM9 7h3v4h-3z" fill="#00e8f8"/><path d="M3 8h1v1h-1zM2 10h1v1h-1zM4 9h1v1h-1zM10 8h1v1h-1zM9 10h1v1h-1zM11 9h1v1h-1z" fill="#90faff"/><path d="M2 6h3v1h-3zM2 11h3v1h-3zM1 7h1v4h-1zM5 7h1v4h-1zM9 6h3v1h-3zM9 11h3v1h-3zM8 7h1v4h-1zM12 7h1v4h-1zM5 6h3v1h-3zM2 5h1v1h-1zM3 4h1v1h-1zM4 3h1v1h-1zM5 2h1v1h-1zM6 1h1v1h-1zM7 2h1v1h-1zM7 3h1v1h-1zM11 5h1v1h-1zM12 5h1v1h-1zM13 4h1v1h-1zM14 3h1v1h-1zM15 2h1v1h-1zM16 3h1v1h-1zM16 4h1v1h-1zM16 5h1v1h-1z" fill="#000"/></svg></div>
<div class="tx yk" style="left:60px;width:87px"><span class="ck bold">01.04</span></div>
<div class="tx yk" style="left:150px;width:700px"><span class="ck" style="transform:scaleX(0.8785)">Abbreviations and acronyms</span></div>
<div class="tx yk" style="left:853px;width:35px;border-right:2px solid #fff"><span class="ck">GP</span></div>
<div class="wd">w/d</div>
<div class="chk"></div>
</div>
<div class="row" style="top:190px"><div class="ln"></div>
<div class="rs"></div>
<div class="gb"><svg class="a" style="left:3px;top:2px" width="17" height="13" viewBox="0 0 17 13" shape-rendering="crispEdges"><path d="M2 7h3v4h-3zM9 7h3v4h-3z" fill="#00e8f8"/><path d="M3 8h1v1h-1zM2 10h1v1h-1zM4 9h1v1h-1zM10 8h1v1h-1zM9 10h1v1h-1zM11 9h1v1h-1z" fill="#90faff"/><path d="M2 6h3v1h-3zM2 11h3v1h-3zM1 7h1v4h-1zM5 7h1v4h-1zM9 6h3v1h-3zM9 11h3v1h-3zM8 7h1v4h-1zM12 7h1v4h-1zM5 6h3v1h-3zM2 5h1v1h-1zM3 4h1v1h-1zM4 3h1v1h-1zM5 2h1v1h-1zM6 1h1v1h-1zM7 2h1v1h-1zM7 3h1v1h-1zM11 5h1v1h-1zM12 5h1v1h-1zM13 4h1v1h-1zM14 3h1v1h-1zM15 2h1v1h-1zM16 3h1v1h-1zM16 4h1v1h-1zM16 5h1v1h-1z" fill="#000"/></svg></div>
<div class="tx yr" style="left:60px;width:87px"><span class="cr num">01.04U</span></div>
<div class="tx yr" style="left:150px;width:700px"><span class="cr" style="transform:scaleX(0.8845)">Scenarios and considerations for the introduction of the Universal Mobile Telecommunications System (UMTS)</span></div>
<div class="tx yr" style="left:853px;width:35px;border-right:2px solid #fff"><span class="cr">-</span></div>
<div class="wd">w/d</div>
<div class="chk"><svg width="7" height="7" viewBox="0 0 7 7" shape-rendering="crispEdges"><path d="M0 2h1v3h-1zM1 3h1v3h-1zM2 4h1v3h-1zM3 3h1v3h-1zM4 2h1v3h-1zM5 1h1v3h-1zM6 0h1v3h-1z" fill="#000"/></svg></div>
</div>
<div class="row" style="top:209px"><div class="ln"></div>
<div class="rs"></div>
<div class="gb"><svg class="a" style="left:3px;top:2px" width="17" height="13" viewBox="0 0 17 13" shape-rendering="crispEdges"><path d="M2 7h3v4h-3zM9 7h3v4h-3z" fill="#00e8f8"/><path d="M3 8h1v1h-1zM2 10h1v1h-1zM4 9h1v1h-1zM10 8h1v1h-1zM9 10h1v1h-1zM11 9h1v1h-1z" fill="#90faff"/><path d="M2 6h3v1h-3zM2 11h3v1h-3zM1 7h1v4h-1zM5 7h1v4h-1zM9 6h3v1h-3zM9 11h3v1h-3zM8 7h1v4h-1zM12 7h1v4h-1zM5 6h3v1h-3zM2 5h1v1h-1zM3 4h1v1h-1zM4 3h1v1h-1zM5 2h1v1h-1zM6 1h1v1h-1zM7 2h1v1h-1zM7 3h1v1h-1zM11 5h1v1h-1zM12 5h1v1h-1zM13 4h1v1h-1zM14 3h1v1h-1zM15 2h1v1h-1zM16 3h1v1h-1zM16 4h1v1h-1zM16 5h1v1h-1z" fill="#000"/></svg></div>
<div class="tx yr" style="left:60px;width:87px"><span class="cr num">01.05</span></div>
<div class="tx yr" style="left:150px;width:700px"><span class="cr" style="transform:scaleX(0.8839)">General Modelling Method</span></div>
<div class="tx yr" style="left:853px;width:35px;border-right:2px solid #fff"><span class="cr">SMG1</span></div>
<div class="wd">w/d</div>
<div class="chk"><svg width="7" height="7" viewBox="0 0 7 7" shape-rendering="crispEdges"><path d="M0 2h1v3h-1zM1 3h1v3h-1zM2 4h1v3h-1zM3 3h1v3h-1zM4 2h1v3h-1zM5 1h1v3h-1zM6 0h1v3h-1z" fill="#000"/></svg></div>
</div>
<div class="row" style="top:228px"><div class="ln"></div>
<div class="rs"></div>
<div class="gb"><svg class="a" style="left:3px;top:2px" width="17" height="13" viewBox="0 0 17 13" shape-rendering="crispEdges"><path d="M2 7h3v4h-3zM9 7h3v4h-3z" fill="#00e8f8"/><path d="M3 8h1v1h-1zM2 10h1v1h-1zM4 9h1v1h-1zM10 8h1v1h-1zM9 10h1v1h-1zM11 9h1v1h-1z" fill="#90faff"/><path d="M2 6h3v1h-3zM2 11h3v1h-3zM1 7h1v4h-1zM5 7h1v4h-1zM9 6h3v1h-3zM9 11h3v1h-3zM8 7h1v4h-1zM12 7h1v4h-1zM5 6h3v1h-3zM2 5h1v1h-1zM3 4h1v1h-1zM4 3h1v1h-1zM5 2h1v1h-1zM6 1h1v1h-1zM7 2h1v1h-1zM7 3h1v1h-1zM11 5h1v1h-1zM12 5h1v1h-1zM13 4h1v1h-1zM14 3h1v1h-1zM15 2h1v1h-1zM16 3h1v1h-1zM16 4h1v1h-1zM16 5h1v1h-1z" fill="#000"/></svg></div>
<div class="tx yr" style="left:60px;width:87px"><span class="cr num">01.05U</span></div>
<div class="tx yr" style="left:150px;width:700px"><span class="cr" style="transform:scaleX(0.8761)">System design methodology for the UMTS</span></div>
<div class="tx yr" style="left:853px;width:35px;border-right:2px solid #fff"><span class="cr">SMG5</span></div>
<div class="wd">w/d</div>
<div class="chk"><svg width="7" height="7" viewBox="0 0 7 7" shape-rendering="crispEdges"><path d="M0 2h1v3h-1zM1 3h1v3h-1zM2 4h1v3h-1zM3 3h1v3h-1zM4 2h1v3h-1zM5 1h1v3h-1zM6 0h1v3h-1z" fill="#000"/></svg></div>
</div>
<div class="row" style="top:247px"><div class="ln"></div>
<div class="rs"></div>
<div class="gb"><svg class="a" style="left:3px;top:2px" width="17" height="13" viewBox="0 0 17 13" shape-rendering="crispEdges"><path d="M2 7h3v4h-3zM9 7h3v4h-3z" fill="#00e8f8"/><path d="M3 8h1v1h-1zM2 10h1v1h-1zM4 9h1v1h-1zM10 8h1v1h-1zM9 10h1v1h-1zM11 9h1v1h-1z" fill="#90faff"/><path d="M2 6h3v1h-3zM2 11h3v1h-3zM1 7h1v4h-1zM5 7h1v4h-1zM9 6h3v1h-3zM9 11h3v1h-3zM8 7h1v4h-1zM12 7h1v4h-1zM5 6h3v1h-3zM2 5h1v1h-1zM3 4h1v1h-1zM4 3h1v1h-1zM5 2h1v1h-1zM6 1h1v1h-1zM7 2h1v1h-1zM7 3h1v1h-1zM11 5h1v1h-1zM12 5h1v1h-1zM13 4h1v1h-1zM14 3h1v1h-1zM15 2h1v1h-1zM16 3h1v1h-1zM16 4h1v1h-1zM16 5h1v1h-1z" fill="#000"/></svg></div>
<div class="tx yr" style="left:60px;width:87px"><span class="cr num">01.06</span></div>
<div class="tx yr" style="left:150px;width:700px"><span class="cr" style="transform:scaleX(0.8766)">Service implementation phases and possible further phases in the GSM PLMN</span></div>
<div class="tx yr" style="left:853px;width:35px;border-right:2px solid #fff"><span class="cr">-</span></div>
<div class="wd">w/d</div>
<div class="chk"><svg width="7" height="7" viewBox="0 0 7 7" shape-rendering="crispEdges"><path d="M0 2h1v3h-1zM1 3h1v3h-1zM2 4h1v3h-1zM3 3h1v3h-1zM4 2h1v3h-1zM5 1h1v3h-1zM6 0h1v3h-1z" fill="#000"/></svg></div>
</div>
<div class="row" style="top:266px"><div class="ln"></div>
<div class="rs"></div>
<div class="gb"><svg class="a" style="left:3px;top:2px" width="17" height="13" viewBox="0 0 17 13" shape-rendering="crispEdges"><path d="M2 7h3v4h-3zM9 7h3v4h-3z" fill="#00e8f8"/><path d="M3 8h1v1h-1zM2 10h1v1h-1zM4 9h1v1h-1zM10 8h1v1h-1zM9 10h1v1h-1zM11 9h1v1h-1z" fill="#90faff"/><path d="M2 6h3v1h-3zM2 11h3v1h-3zM1 7h1v4h-1zM5 7h1v4h-1zM9 6h3v1h-3zM9 11h3v1h-3zM8 7h1v4h-1zM12 7h1v4h-1zM5 6h3v1h-3zM2 5h1v1h-1zM3 4h1v1h-1zM4 3h1v1h-1zM5 2h1v1h-1zM6 1h1v1h-1zM7 2h1v1h-1zM7 3h1v1h-1zM11 5h1v1h-1zM12 5h1v1h-1zM13 4h1v1h-1zM14 3h1v1h-1zM15 2h1v1h-1zM16 3h1v1h-1zM16 4h1v1h-1zM16 5h1v1h-1z" fill="#000"/></svg></div>
<div class="tx yr" style="left:60px;width:87px"><span class="cr num">01.07</span></div>
<div class="tx yr" style="left:150px;width:700px"><span class="cr" style="transform:scaleX(0.8840)">Updating procedure for GSM Recommendations</span></div>
<div class="tx yr" style="left:853px;width:35px;border-right:2px solid #fff"><span class="cr">-</span></div>
<div class="wd">w/d</div>
<div class="chk"><svg width="7" height="7" viewBox="0 0 7 7" shape-rendering="crispEdges"><path d="M0 2h1v3h-1zM1 3h1v3h-1zM2 4h1v3h-1zM3 3h1v3h-1zM4 2h1v3h-1zM5 1h1v3h-1zM6 0h1v3h-1z" fill="#000"/></svg></div>
</div>
<div class="row" style="top:285px"><div class="ln"></div>
<div class="rs"></div>
<div class="gb"><svg class="a" style="left:3px;top:2px" width="17" height="13" viewBox="0 0 17 13" shape-rendering="crispEdges"><path d="M2 7h3v4h-3zM9 7h3v4h-3z" fill="#00e8f8"/><path d="M3 8h1v1h-1zM2 10h1v1h-1zM4 9h1v1h-1zM10 8h1v1h-1zM9 10h1v1h-1zM11 9h1v1h-1z" fill="#90faff"/><path d="M2 6h3v1h-3zM2 11h3v1h-3zM1 7h1v4h-1zM5 7h1v4h-1zM9 6h3v1h-3zM9 11h3v1h-3zM8 7h1v4h-1zM12 7h1v4h-1zM5 6h3v1h-3zM2 5h1v1h-1zM3 4h1v1h-1zM4 3h1v1h-1zM5 2h1v1h-1zM6 1h1v1h-1zM7 2h1v1h-1zM7 3h1v1h-1zM11 5h1v1h-1zM12 5h1v1h-1zM13 4h1v1h-1zM14 3h1v1h-1zM15 2h1v1h-1zM16 3h1v1h-1zM16 4h1v1h-1zM16 5h1v1h-1z" fill="#000"/></svg></div>
<div class="tx yk" style="left:60px;width:87px"><span class="ck bold">01.31</span></div>
<div class="tx yk" style="left:150px;width:700px"><span class="ck" style="transform:scaleX(0.8693)">Fraud Information Gathering System (FIGS); Service requirements; Stage 0</span></div>
<div class="tx yk" style="left:853px;width:35px;border-right:2px solid #fff"><span class="ck">S3</span></div>
<div class="wd">w/d</div>
<div class="chk"></div>
</div>
<div class="row" style="top:304px"><div class="ln"></div>
<div class="rs"></div>
<div class="gb"><svg class="a" style="left:3px;top:2px" width="17" height="13" viewBox="0 0 17 13" shape-rendering="crispEdges"><path d="M2 7h3v4h-3zM9 7h3v4h-3z" fill="#00e8f8"/><path d="M3 8h1v1h-1zM2 10h1v1h-1zM4 9h1v1h-1zM10 8h1v1h-1zM9 10h1v1h-1zM11 9h1v1h-1z" fill="#90faff"/><path d="M2 6h3v1h-3zM2 11h3v1h-3zM1 7h1v4h-1zM5 7h1v4h-1zM9 6h3v1h-3zM9 11h3v1h-3zM8 7h1v4h-1zM12 7h1v4h-1zM5 6h3v1h-3zM2 5h1v1h-1zM3 4h1v1h-1zM4 3h1v1h-1zM5 2h1v1h-1zM6 1h1v1h-1zM7 2h1v1h-1zM7 3h1v1h-1zM11 5h1v1h-1zM12 5h1v1h-1zM13 4h1v1h-1zM14 3h1v1h-1zM15 2h1v1h-1zM16 3h1v1h-1zM16 4h1v1h-1zM16 5h1v1h-1z" fill="#000"/></svg></div>
<div class="tx yk" style="left:60px;width:87px"><span class="ck bold">01.33</span></div>
<div class="tx yk" style="left:150px;width:700px"><span class="ck" style="transform:scaleX(0.8753)">Lawful Interception requirements for GSM</span></div>
<div class="tx yk" style="left:853px;width:35px;border-right:2px solid #fff"><span class="ck">S3</span></div>
<div class="wd">w/d</div>
<div class="chk"></div>
</div>
<div class="row" style="top:323px"><div class="ln"></div>
<div class="rs"></div>
<div class="gb"><svg class="a" style="left:3px;top:2px" width="17" height="13" viewBox="0 0 17 13" shape-rendering="crispEdges"><path d="M2 7h3v4h-3zM9 7h3v4h-3z" fill="#00e8f8"/><path d="M3 8h1v1h-1zM2 10h1v1h-1zM4 9h1v1h-1zM10 8h1v1h-1zM9 10h1v1h-1zM11 9h1v1h-1z" fill="#90faff"/><path d="M2 6h3v1h-3zM2 11h3v1h-3zM1 7h1v4h-1zM5 7h1v4h-1zM9 6h3v1h-3zM9 11h3v1h-3zM8 7h1v4h-1zM12 7h1v4h-1zM5 6h3v1h-3zM2 5h1v1h-1zM3 4h1v1h-1zM4 3h1v1h-1zM5 2h1v1h-1zM6 1h1v1h-1zM7 2h1v1h-1zM7 3h1v1h-1zM11 5h1v1h-1zM12 5h1v1h-1zM13 4h1v1h-1zM14 3h1v1h-1zM15 2h1v1h-1zM16 3h1v1h-1zM16 4h1v1h-1zM16 5h1v1h-1z" fill="#000"/></svg></div>
<div class="tx yr" style="left:60px;width:87px"><span class="cr num">01.34</span></div>
<div class="tx yr" style="left:150px;width:700px"><span class="cr" style="transform:scaleX(0.8843)">Requirements of High Speed Circuit Switched Data (HSCSD)</span></div>
<div class="tx yr" style="left:853px;width:35px;border-right:2px solid #fff"><span class="cr">-</span></div>
<div class="wd">w/d</div>
<div class="chk"><svg width="7" height="7" viewBox="0 0 7 7" shape-rendering="crispEdges"><path d="M0 2h1v3h-1zM1 3h1v3h-1zM2 4h1v3h-1zM3 3h1v3h-1zM4 2h1v3h-1zM5 1h1v3h-1zM6 0h1v3h-1z" fill="#000"/></svg></div>
</div>
<div class="row" style="top:342px"><div class="ln"></div>
<div class="rs"></div>
<div class="gb"><svg class="a" style="left:3px;top:2px" width="17" height="13" viewBox="0 0 17 13" shape-rendering="crispEdges"><path d="M2 7h3v4h-3zM9 7h3v4h-3z" fill="#00e8f8"/><path d="M3 8h1v1h-1zM2 10h1v1h-1zM4 9h1v1h-1zM10 8h1v1h-1zM9 10h1v1h-1zM11 9h1v1h-1z" fill="#90faff"/><path d="M2 6h3v1h-3zM2 11h3v1h-3zM1 7h1v4h-1zM5 7h1v4h-1zM9 6h3v1h-3zM9 11h3v1h-3zM8 7h1v4h-1zM12 7h1v4h-1zM5 6h3v1h-3zM2 5h1v1h-1zM3 4h1v1h-1zM4 3h1v1h-1zM5 2h1v1h-1zM6 1h1v1h-1zM7 2h1v1h-1zM7 3h1v1h-1zM11 5h1v1h-1zM12 5h1v1h-1zM13 4h1v1h-1zM14 3h1v1h-1zM15 2h1v1h-1zM16 3h1v1h-1zM16 4h1v1h-1zM16 5h1v1h-1z" fill="#000"/></svg></div>
<div class="tx yk" style="left:60px;width:87px"><span class="ck bold">01.48</span></div>
<div class="tx yk" style="left:150px;width:700px"><span class="cbl" style="transform:scaleX(0.8847)">ISDN-based DECT/GSM interworking; Feasibility study</span></div>
<div class="tx yk" style="left:853px;width:35px;border-right:2px solid #fff"><span class="cbl">S1</span></div>
<div class="wd">w/d</div>
<div class="chk"></div>
</div>
<div class="row" style="top:361px"><div class="ln"></div>
<div class="rs"></div>
<div class="gb"><svg class="a" style="left:3px;top:2px" width="17" height="13" viewBox="0 0 17 13" shape-rendering="crispEdges"><path d="M2 7h3v4h-3zM9 7h3v4h-3z" fill="#00e8f8"/><path d="M3 8h1v1h-1zM2 10h1v1h-1zM4 9h1v1h-1zM10 8h1v1h-1zM9 10h1v1h-1zM11 9h1v1h-1z" fill="#90faff"/><path d="M2 6h3v1h-3zM2 11h3v1h-3zM1 7h1v4h-1zM5 7h1v4h-1zM9 6h3v1h-3zM9 11h3v1h-3zM8 7h1v4h-1zM12 7h1v4h-1zM5 6h3v1h-3zM2 5h1v1h-1zM3 4h1v1h-1zM4 3h1v1h-1zM5 2h1v1h-1zM6 1h1v1h-1zM7 2h1v1h-1zM7 3h1v1h-1zM11 5h1v1h-1zM12 5h1v1h-1zM13 4h1v1h-1zM14 3h1v1h-1zM15 2h1v1h-1zM16 3h1v1h-1zM16 4h1v1h-1zM16 5h1v1h-1z" fill="#000"/></svg></div>
<div class="tx yr" style="left:60px;width:87px"><span class="cr num">01.50</span></div>
<div class="tx yr" style="left:150px;width:700px"><span class="cr" style="transform:scaleX(0.8832)">Radio Local Loop (RLL) using GSM</span></div>
<div class="tx yr" style="left:853px;width:35px;border-right:2px solid #fff"><span class="cr">SMG1</span></div>
<div class="wd">w/d</div>
<div class="chk"><svg width="7" height="7" viewBox="0 0 7 7" shape-rendering="crispEdges"><path d="M0 2h1v3h-1zM1 3h1v3h-1zM2 4h1v3h-1zM3 3h1v3h-1zM4 2h1v3h-1zM5 1h1v3h-1zM6 0h1v3h-1z" fill="#000"/></svg></div>
</div>
<div class="row" style="top:380px"><div class="ln"></div>
<div class="rs"></div>
<div class="gb"><svg class="a" style="left:3px;top:2px" width="17" height="13" viewBox="0 0 17 13" shape-rendering="crispEdges"><path d="M2 7h3v4h-3zM9 7h3v4h-3z" fill="#00e8f8"/><path d="M3 8h1v1h-1zM2 10h1v1h-1zM4 9h1v1h-1zM10 8h1v1h-1zM9 10h1v1h-1zM11 9h1v1h-1z" fill="#90faff"/><path d="M2 6h3v1h-3zM2 11h3v1h-3zM1 7h1v4h-1zM5 7h1v4h-1zM9 6h3v1h-3zM9 11h3v1h-3zM8 7h1v4h-1zM12 7h1v4h-1zM5 6h3v1h-3zM2 5h1v1h-1zM3 4h1v1h-1zM4 3h1v1h-1zM5 2h1v1h-1zM6 1h1v1h-1zM7 2h1v1h-1zM7 3h1v1h-1zM11 5h1v1h-1zM12 5h1v1h-1zM13 4h1v1h-1zM14 3h1v1h-1zM15 2h1v1h-1zM16 3h1v1h-1zM16 4h1v1h-1zM16 5h1v1h-1z" fill="#000"/></svg></div>
<div class="tx yr" style="left:60px;width:87px"><span class="cr num">01.51</span></div>
<div class="tx yr" style="left:150px;width:700px"><span class="cr" style="transform:scaleX(0.8800)">Dual mode of operation and roaming</span></div>
<div class="tx yr" style="left:853px;width:35px;border-right:2px solid #fff"><span class="cr">SMG1</span></div>
<div class="wd">w/d</div>
<div class="chk"><svg width="7" height="7" viewBox="0 0 7 7" shape-rendering="crispEdges"><path d="M0 2h1v3h-1zM1 3h1v3h-1zM2 4h1v3h-1zM3 3h1v3h-1zM4 2h1v3h-1zM5 1h1v3h-1zM6 0h1v3h-1z" fill="#000"/></svg></div>
</div>
<div class="row" style="top:399px"><div class="ln"></div>
<div class="rs"></div>
<div class="gb"><svg class="a" style="left:3px;top:2px" width="17" height="13" viewBox="0 0 17 13" shape-rendering="crispEdges"><path d="M2 7h3v4h-3zM9 7h3v4h-3z" fill="#00e8f8"/><path d="M3 8h1v1h-1zM2 10h1v1h-1zM4 9h1v1h-1zM10 8h1v1h-1zM9 10h1v1h-1zM11 9h1v1h-1z" fill="#90faff"/><path d="M2 6h3v1h-3zM2 11h3v1h-3zM1 7h1v4h-1zM5 7h1v4h-1zM9 6h3v1h-3zM9 11h3v1h-3zM8 7h1v4h-1zM12 7h1v4h-1zM5 6h3v1h-3zM2 5h1v1h-1zM3 4h1v1h-1zM4 3h1v1h-1zM5 2h1v1h-1zM6 1h1v1h-1zM7 2h1v1h-1zM7 3h1v1h-1zM11 5h1v1h-1zM12 5h1v1h-1zM13 4h1v1h-1zM14 3h1v1h-1zM15 2h1v1h-1zM16 3h1v1h-1zM16 4h1v1h-1zM16 5h1v1h-1z" fill="#000"/></svg></div>
<div class="tx yk" style="left:60px;width:87px"><span class="ck bold">01.56</span></div>
<div class="tx yk" style="left:150px;width:700px"><span class="cbl" style="transform:scaleX(0.8763)">GSM Cordless Telephony System (CTS) (Phase 1); CTS Authentication and Key Generation Algorithms Requirements</span></div>
<div class="tx yk" style="left:853px;width:35px;border-right:2px solid #fff"><span class="cbl">S1</span></div>
<div class="wd">w/d</div>
<div class="chk"></div>
</div>
<div class="row" style="top:418px"><div class="ln"></div>
<div class="rs"></div>
<div class="gb"><svg class="a" style="left:3px;top:2px" width="17" height="13" viewBox="0 0 17 13" shape-rendering="crispEdges"><path d="M2 7h3v4h-3zM9 7h3v4h-3z" fill="#00e8f8"/><path d="M3 8h1v1h-1zM2 10h1v1h-1zM4 9h1v1h-1zM10 8h1v1h-1zM9 10h1v1h-1zM11 9h1v1h-1z" fill="#90faff"/><path d="M2 6h3v1h-3zM2 11h3v1h-3zM1 7h1v4h-1zM5 7h1v4h-1zM9 6h3v1h-3zM9 11h3v1h-3zM8 7h1v4h-1zM12 7h1v4h-1zM5 6h3v1h-3zM2 5h1v1h-1zM3 4h1v1h-1zM4 3h1v1h-1zM5 2h1v1h-1zM6 1h1v1h-1zM7 2h1v1h-1zM7 3h1v1h-1zM11 5h1v1h-1zM12 5h1v1h-1zM13 4h1v1h-1zM14 3h1v1h-1zM15 2h1v1h-1zM16 3h1v1h-1zM16 4h1v1h-1zM16 5h1v1h-1z" fill="#000"/></svg></div>
<div class="tx yk" style="left:60px;width:87px"><span class="ck bold">01.60</span></div>
<div class="tx yk" style="left:150px;width:700px"><span class="cbl" style="transform:scaleX(0.8690)">GPRS requirements</span></div>
<div class="tx yk" style="left:853px;width:35px;border-right:2px solid #fff"><span class="cbl">S1</span></div>
<div class="wd">w/d</div>
<div class="chk"></div>
</div>
<div class="row" style="top:437px"><div class="ln"></div>
<div class="rs"></div>
<div class="gb"><svg class="a" style="left:3px;top:2px" width="17" height="13" viewBox="0 0 17 13" shape-rendering="crispEdges"><path d="M2 7h3v4h-3zM9 7h3v4h-3z" fill="#00e8f8"/><path d="M3 8h1v1h-1zM2 10h1v1h-1zM4 9h1v1h-1zM10 8h1v1h-1zM9 10h1v1h-1zM11 9h1v1h-1z" fill="#90faff"/><path d="M2 6h3v1h-3zM2 11h3v1h-3zM1 7h1v4h-1zM5 7h1v4h-1zM9 6h3v1h-3zM9 11h3v1h-3zM8 7h1v4h-1zM12 7h1v4h-1zM5 6h3v1h-3zM2 5h1v1h-1zM3 4h1v1h-1zM4 3h1v1h-1zM5 2h1v1h-1zM6 1h1v1h-1zM7 2h1v1h-1zM7 3h1v1h-1zM11 5h1v1h-1zM12 5h1v1h-1zM13 4h1v1h-1zM14 3h1v1h-1zM15 2h1v1h-1zM16 3h1v1h-1zM16 4h1v1h-1zM16 5h1v1h-1z" fill="#000"/></svg></div>
<div class="tx yk" style="left:60px;width:87px"><span class="ck bold">01.61</span></div>
<div class="tx yk" style="left:150px;width:700px"><span class="ck" style="transform:scaleX(0.8787)">General Packet Radio Service (GPRS); GPRS ciphering algorithm requirements</span></div>
<div class="tx yk" style="left:853px;width:35px;border-right:2px solid #fff"><span class="ck">S3</span></div>
<div class="wd">w/d</div>
<div class="chk"></div>
</div>
<div class="row" style="top:456px"><div class="ln"></div>
<div class="rs"></div>
<div class="gb"><svg class="a" style="left:3px;top:2px" width="17" height="13" viewBox="0 0 17 13" shape-rendering="crispEdges"><path d="M2 7h3v4h-3zM9 7h3v4h-3z" fill="#00e8f8"/><path d="M3 8h1v1h-1zM2 10h1v1h-1zM4 9h1v1h-1zM10 8h1v1h-1zM9 10h1v1h-1zM11 9h1v1h-1z" fill="#90faff"/><path d="M2 6h3v1h-3zM2 11h3v1h-3zM1 7h1v4h-1zM5 7h1v4h-1zM9 6h3v1h-3zM9 11h3v1h-3zM8 7h1v4h-1zM12 7h1v4h-1zM5 6h3v1h-3zM2 5h1v1h-1zM3 4h1v1h-1zM4 3h1v1h-1zM5 2h1v1h-1zM6 1h1v1h-1zM7 2h1v1h-1zM7 3h1v1h-1zM11 5h1v1h-1zM12 5h1v1h-1zM13 4h1v1h-1zM14 3h1v1h-1zM15 2h1v1h-1zM16 3h1v1h-1zM16 4h1v1h-1zM16 5h1v1h-1z" fill="#000"/></svg></div>
<div class="tx yr" style="left:60px;width:87px"><span class="cr num">01.78</span></div>
<div class="tx yr" style="left:150px;width:700px"><span class="cr" style="transform:scaleX(0.8831)">Customized Applications for Mobile networks using Enhanced Logic (CAMEL); Stage 0</span></div>
<div class="tx yr" style="left:853px;width:35px;border-right:2px solid #fff"><span class="cr">-</span></div>
<div class="wd">w/d</div>
<div class="chk"><svg width="7" height="7" viewBox="0 0 7 7" shape-rendering="crispEdges"><path d="M0 2h1v3h-1zM1 3h1v3h-1zM2 4h1v3h-1zM3 3h1v3h-1zM4 2h1v3h-1zM5 1h1v3h-1zM6 0h1v3h-1z" fill="#000"/></svg></div>
</div>
<div class="row" style="top:475px"><div class="ln"></div>
<div class="rs"></div>
<div class="gb"><svg class="a" style="left:3px;top:2px" width="17" height="13" viewBox="0 0 17 13" shape-rendering="crispEdges"><path d="M2 7h3v4h-3zM9 7h3v4h-3z" fill="#00e8f8"/><path d="M3 8h1v1h-1zM2 10h1v1h-1zM4 9h1v1h-1zM10 8h1v1h-1zM9 10h1v1h-1zM11 9h1v1h-1z" fill="#90faff"/><path d="M2 6h3v1h-3zM2 11h3v1h-3zM1 7h1v4h-1zM5 7h1v4h-1zM9 6h3v1h-3zM9 11h3v1h-3zM8 7h1v4h-1zM12 7h1v4h-1zM5 6h3v1h-3zM2 5h1v1h-1zM3 4h1v1h-1zM4 3h1v1h-1zM5 2h1v1h-1zM6 1h1v1h-1zM7 2h1v1h-1zM7 3h1v1h-1zM11 5h1v1h-1zM12 5h1v1h-1zM13 4h1v1h-1zM14 3h1v1h-1zM15 2h1v1h-1zM16 3h1v1h-1zM16 4h1v1h-1zM16 5h1v1h-1z" fill="#000"/></svg></div>
<div class="tx yk" style="left:60px;width:87px"><span class="ck bold">02.01</span></div>
<div class="tx yk" style="left:150px;width:700px"><span class="ck" style="transform:scaleX(0.8851)">Principles of telecommunication services supported by a GSM Public Land Mobile Network(PLMN)</span></div>
<div class="tx yk" style="left:853px;width:35px;border-right:2px solid #fff"><span class="ck">S1</span></div>
<div class="wd">w/d</div>
<div class="chk"></div>
</div>
<div class="row" style="top:494px"><div class="ln"></div>
<div class="rs"></div>
<div class="gb"><svg class="a" style="left:3px;top:2px" width="17" height="13" viewBox="0 0 17 13" shape-rendering="crispEdges"><path d="M2 7h3v4h-3zM9 7h3v4h-3z" fill="#00e8f8"/><path d="M3 8h1v1h-1zM2 10h1v1h-1zM4 9h1v1h-1zM10 8h1v1h-1zM9 10h1v1h-1zM11 9h1v1h-1z" fill="#90faff"/><path d="M2 6h3v1h-3zM2 11h3v1h-3zM1 7h1v4h-1zM5 7h1v4h-1zM9 6h3v1h-3zM9 11h3v1h-3zM8 7h1v4h-1zM12 7h1v4h-1zM5 6h3v1h-3zM2 5h1v1h-1zM3 4h1v1h-1zM4 3h1v1h-1zM5 2h1v1h-1zM6 1h1v1h-1zM7 2h1v1h-1zM7 3h1v1h-1zM11 5h1v1h-1zM12 5h1v1h-1zM13 4h1v1h-1zM14 3h1v1h-1zM15 2h1v1h-1zM16 3h1v1h-1zM16 4h1v1h-1zM16 5h1v1h-1z" fill="#000"/></svg></div>
<div class="tx yr" style="left:60px;width:87px"><span class="cr num">02.01U</span></div>
<div class="tx yr" style="left:150px;width:700px"><span class="cr" style="transform:scaleX(0.8831)">Framework for services to be supported by UMTS</span></div>
<div class="tx yr" style="left:853px;width:35px;border-right:2px solid #fff"><span class="cr">-</span></div>
<div class="wd">w/d</div>
<div class="chk"><svg width="7" height="7" viewBox="0 0 7 7" shape-rendering="crispEdges"><path d="M0 2h1v3h-1zM1 3h1v3h-1zM2 4h1v3h-1zM3 3h1v3h-1zM4 2h1v3h-1zM5 1h1v3h-1zM6 0h1v3h-1z" fill="#000"/></svg></div>
</div>
<div class="row" style="top:513px"><div class="ln"></div>
<div class="rs"></div>
<div class="gb"><svg class="a" style="left:3px;top:2px" width="17" height="13" viewBox="0 0 17 13" shape-rendering="crispEdges"><path d="M2 7h3v4h-3zM9 7h3v4h-3z" fill="#00e8f8"/><path d="M3 8h1v1h-1zM2 10h1v1h-1zM4 9h1v1h-1zM10 8h1v1h-1zM9 10h1v1h-1zM11 9h1v1h-1z" fill="#90faff"/><path d="M2 6h3v1h-3zM2 11h3v1h-3zM1 7h1v4h-1zM5 7h1v4h-1zM9 6h3v1h-3zM9 11h3v1h-3zM8 7h1v4h-1zM12 7h1v4h-1zM5 6h3v1h-3zM2 5h1v1h-1zM3 4h1v1h-1zM4 3h1v1h-1zM5 2h1v1h-1zM6 1h1v1h-1zM7 2h1v1h-1zM7 3h1v1h-1zM11 5h1v1h-1zM12 5h1v1h-1zM13 4h1v1h-1zM14 3h1v1h-1zM15 2h1v1h-1zM16 3h1v1h-1zM16 4h1v1h-1zM16 5h1v1h-1z" fill="#000"/></svg></div>
<div class="tx yk" style="left:60px;width:87px"><span class="ck bold">02.02</span></div>
<div class="tx yk" style="left:150px;width:700px"><span class="cbl" style="transform:scaleX(0.8837)">Bearer Services (BS) Supported by a GSM Public Land Mobile Network (PLMN)</span></div>
<div class="tx yk" style="left:853px;width:35px;border-right:2px solid #fff"><span class="cbl">S1</span></div>
<div class="wd">w/d</div>
<div class="chk"></div>
</div>
<div class="row" style="top:532px"><div class="ln"></div>
<div class="rs"></div>
<div class="gb"><svg class="a" style="left:3px;top:2px" width="17" height="13" viewBox="0 0 17 13" shape-rendering="crispEdges"><path d="M2 7h3v4h-3zM9 7h3v4h-3z" fill="#00e8f8"/><path d="M3 8h1v1h-1zM2 10h1v1h-1zM4 9h1v1h-1zM10 8h1v1h-1zM9 10h1v1h-1zM11 9h1v1h-1z" fill="#90faff"/><path d="M2 6h3v1h-3zM2 11h3v1h-3zM1 7h1v4h-1zM5 7h1v4h-1zM9 6h3v1h-3zM9 11h3v1h-3zM8 7h1v4h-1zM12 7h1v4h-1zM5 6h3v1h-3zM2 5h1v1h-1zM3 4h1v1h-1zM4 3h1v1h-1zM5 2h1v1h-1zM6 1h1v1h-1zM7 2h1v1h-1zM7 3h1v1h-1zM11 5h1v1h-1zM12 5h1v1h-1zM13 4h1v1h-1zM14 3h1v1h-1zM15 2h1v1h-1zM16 3h1v1h-1zM16 4h1v1h-1zM16 5h1v1h-1z" fill="#000"/></svg></div>
<div class="tx yk" style="left:60px;width:87px"><span class="ck bold">02.03</span></div>
<div class="tx yk" style="left:150px;width:700px"><span class="cbl" style="transform:scaleX(0.8925)">Teleservices Supported by a GSM Public Land Mobile Network (PLMN)</span></div>
<div class="tx yk" style="left:853px;width:35px;border-right:2px solid #fff"><span class="cbl">S1</span></div>
<div class="wd">w/d</div>
<div class="chk"></div>
</div>
</div>
<div class="a" style="left:979px;top:141px;width:16px;height:584px;background-color:#d4d0c8;background-image:conic-gradient(#fff 25%,#d4d0c8 0 50%,#fff 0 75%,#d4d0c8 0);background-size:2px 2px"></div>
<div class="btn" style="left:979px;top:141px;width:16px;height:16px"><svg class="a" style="left:3px;top:4px" width="8" height="5"><path d="M0 4.5h7l-3.5 -4z" fill="#000"/></svg></div>
<div class="btn" style="left:979px;top:157px;width:16px;height:8px"></div>
<div class="btn" style="left:979px;top:709px;width:16px;height:16px"><svg class="a" style="left:3px;top:5px" width="8" height="5"><path d="M0 0.5h7l-3.5 4z" fill="#000"/></svg></div>
<div class="a" style="left:33px;top:724px;width:946px;height:17px;background:#d4d0c8"></div>
<div class="t " style="left:38px;top:727.5px;letter-spacing:-0.073px;">Record:</div>
<div class="btn" style="left:82px;top:726px;width:20px;height:15px"><svg class="a" style="left:4px;top:2px" width="10" height="9"><rect x="1" y="0" width="2" height="9" fill="#000"/><path d="M9 0v9l-5 -4.5z" fill="#000"/></svg></div>
<div class="btn" style="left:102px;top:726px;width:20px;height:15px"><svg class="a" style="left:5px;top:2px" width="8" height="9"><path d="M6 0v9l-5 -4.5z" fill="#808080"/></svg></div>
<div class="a" style="left:127px;top:726px;width:62px;height:15px;background:#fff;border:1px solid;border-color:#404040 #fff #fff #404040"></div>
<div class="t " style="left:181px;top:727.5px;">1</div>
<div class="btn" style="left:194px;top:726px;width:19px;height:15px"><svg class="a" style="left:6px;top:2px" width="8" height="9"><path d="M1 0v9l5 -4.5z" fill="#000"/></svg></div>
<div class="btn" style="left:213px;top:726px;width:20px;height:15px"><svg class="a" style="left:4px;top:2px" width="10" height="9"><path d="M1 0v9l5 -4.5z" fill="#000"/><rect x="7" y="0" width="2" height="9" fill="#000"/></svg></div>
<div class="btn" style="left:233px;top:726px;width:20px;height:15px"><svg class="a" style="left:2px;top:2px" width="15" height="9"><path d="M1 0v9l5 -4.5z" fill="#000"/><path d="M10.5 1v7M7.5 4.5h6M8.3 2.3l4.4 4.4M12.7 2.3l-4.4 4.4" stroke="#000" stroke-width="1"/></svg></div>
<div class="t " style="left:260px;top:727.5px;letter-spacing:-0.586px;">of</div>
<div class="t " style="left:275.5px;top:727.5px;letter-spacing:-0.242px;">2540</div>
<svg class="a" style="left:8px;top:0px" width="18" height="18" viewBox="0 0 18 18"><defs><linearGradient id="dg" x1="0" y1="0" x2="1" y2="1"><stop offset="0" stop-color="#f4fbfd"/><stop offset=".6" stop-color="#c4d2d8"/><stop offset="1" stop-color="#6a767c"/></linearGradient></defs><ellipse cx="5.4" cy="7" rx="4" ry="5.9" fill="url(#dg)" transform="rotate(-14 5.4 7)"/><ellipse cx="4.6" cy="5.6" rx="2.2" ry="3.6" fill="#eef8fb" transform="rotate(-14 4.6 5.6)"/><path d="M4.6 11.4l1.6 2.2h2" stroke="#7c888c" stroke-width="1.5" fill="none"/><rect x="6.5" y="6.5" width="10" height="8" fill="#1a2ad8" stroke="#d8d4c8" stroke-width="1.2"/><path d="M12 7.2h4v3.2z" fill="#7fa6ff"/><path d="M11.5 7.2L13 11l3.4-.6V7.2z" fill="#5a80f0" opacity=".8"/><rect x="9" y="15" width="5" height="1" fill="#d8d4c8"/><rect x="8" y="16" width="7" height="1" fill="#b8b4a8"/></svg>
<svg class="a" style="left:9px;top:20px" width="16" height="16" viewBox="0 0 16 16"><rect x="0" y="0" width="16" height="16" fill="#c05888"/><path d="M0 0h16L14 2H2v12l-2 2z" fill="#e8a0bc"/><path d="M16 16H0l2-2h12V2l2-2z" fill="#a03868"/><rect x="2" y="2" width="12" height="12" fill="#fff6fa"/><circle cx="9.8" cy="6" r="3.2" fill="#b44a80"/><circle cx="10.6" cy="5" r="1" fill="#fbe4ee"/><path d="M7.8 8L4 11.8l1.2 1 1.2-.9.9.5.9-1.2" stroke="#b44a80" stroke-width="2.4" fill="none" stroke-linejoin="round"/></svg>
<svg class="a" style="left:33px;top:122px" width="16" height="14" viewBox="0 0 16 14"><defs><linearGradient id="fi" x1="0" y1="0" x2="1" y2="1"><stop offset="0" stop-color="#fff"/><stop offset=".55" stop-color="#eef2fb"/><stop offset="1" stop-color="#7f9fe0"/></linearGradient><linearGradient id="ft" x1="0" x2="1"><stop offset="0" stop-color="#a8c4ff"/><stop offset="1" stop-color="#3a6ae0"/></linearGradient></defs><rect x="0" y="0" width="15" height="13" fill="url(#fi)"/><rect x="0" y="0" width="15" height="3" fill="url(#ft)"/><path d="M14.5 3v10M0 12.5h15" stroke="#4a5a80" stroke-width="1"/><path d="M2 5h4M2 9h4" stroke="#555" stroke-width="1.2"/><rect x="7.5" y="4.5" width="5" height="2" fill="#fff" stroke="#444"/><rect x="7.5" y="8.5" width="5" height="2" fill="#fff" stroke="#444"/></svg>
<svg class="a" style="left:14px;top:846px" width="17" height="16" viewBox="0 0 17 16"><rect x="2" y="0" width="11" height="10" fill="#f4f7fd"/><rect x="2" y="0" width="11" height="3" fill="#4a7af0"/><path d="M3.5 3.5v6" stroke="#fff" stroke-width="1.4"/><path d="M4.4 4.5h1M4.4 6.5h1M4.4 8.5h1" stroke="#6a88d0"/><path d="M2.5 10.2h4" stroke="#203858" stroke-width="1"/><rect x="0" y="5" width="10" height="11" fill="#e8eefb"/><rect x="0" y="5" width="2.4" height="2" fill="#7fa0f4"/><path d="M1.5 7v8" stroke="#fff" stroke-width="1.6"/><path d="M2.4 12.5h4" stroke="#8aa0d8"/><path d="M.5 15.5h10V14" stroke="#203858" stroke-width="1" fill="none"/><rect x="5.4" y="3" width="11" height="11" fill="#284a78"/><rect x="5.4" y="3" width="11" height="3" fill="#4a80f4"/><path d="M6.5 4.5h8" stroke="#9abcff" stroke-width="1"/><rect x="6" y="6" width="9.2" height="7" fill="#fff"/><path d="M7.2 7.5h2.6M11 7.5h3M7.2 9.5h2.6M11 9.5h3M7.2 11.5h2.6M11 11.5h3" stroke="#6a84c8" stroke-width="1"/></svg>
<svg class="a" style="left:620px;top:116px" width="122" height="86"><ellipse cx="60.5" cy="42.7" rx="52" ry="34.7" fill="none" stroke="rgba(255,30,30,0.62)" stroke-width="6"/></svg>
</div></body></html>
